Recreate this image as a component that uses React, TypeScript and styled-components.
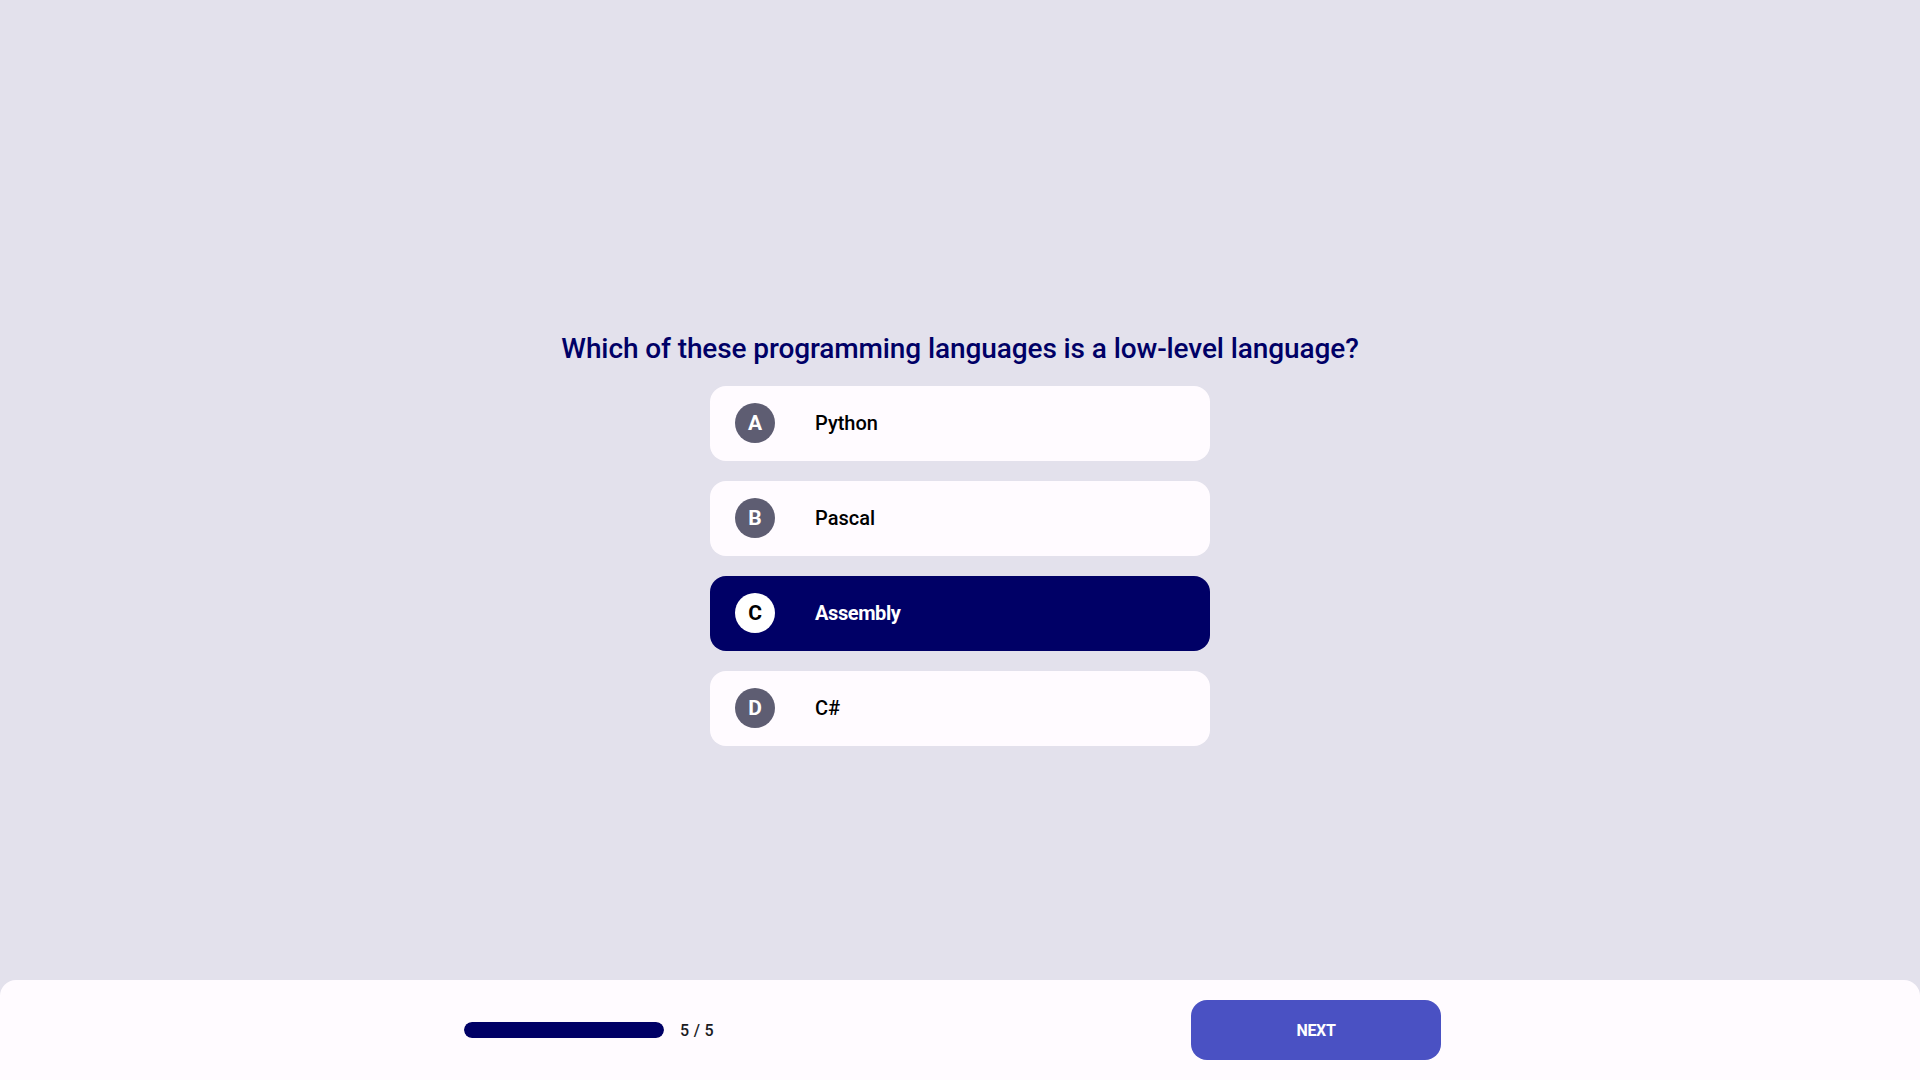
import React, { useState } from "react";
import styled, { createGlobalStyle } from "styled-components";

const GlobalStyle = createGlobalStyle`
  html, body {
    margin: 0;
    padding: 0;
    background: #e3e1ec;
    font-family: Roboto, "Noto Sans", "Liberation Sans", sans-serif;
  }
  * { box-sizing: border-box; }
`;

const Page = styled.div`
  width: 1920px;
  height: 1080px;
  display: flex;
  flex-direction: column;
  background: #e3e1ec;
  overflow: hidden;
`;

const Main = styled.main`
  flex: 1;
  display: flex;
  flex-direction: column;
  align-items: center;
  padding-top: 332px;
`;

const Question = styled.h1`
  margin: 0 0 20px;
  font-size: 28px;
  line-height: 34px;
  font-weight: 500;
  color: #000066;
  letter-spacing: -0.1px;
`;

const Options = styled.div`
  display: flex;
  flex-direction: column;
  gap: 20px;
  width: 500px;
`;

const Option = styled.button<{ $selected: boolean }>`
  display: flex;
  align-items: center;
  height: 75px;
  padding: 0 0 2px 25px;
  border: none;
  border-radius: 16px;
  background: ${(p) => (p.$selected ? "#000066" : "#fffbff")};
  cursor: pointer;
  font-family: inherit;
  text-align: left;
`;

const Badge = styled.span<{ $selected: boolean }>`
  width: 40px;
  height: 40px;
  border-radius: 50%;
  flex: none;
  display: flex;
  align-items: center;
  justify-content: center;
  background: ${(p) => (p.$selected ? "#ffffff" : "#5e5d72")};
  color: ${(p) => (p.$selected ? "#000000" : "#ffffff")};
  font-size: 21px;
  font-weight: 700;
`;

const Label = styled.span<{ $selected: boolean }>`
  margin-left: 40px;
  font-size: 20px;
  font-weight: ${(p) => (p.$selected ? 700 : 500)};
  color: ${(p) => (p.$selected ? "#ffffff" : "#000000")};
  letter-spacing: ${(p) => (p.$selected ? "-0.4px" : "0")};
`;

const Footer = styled.footer`
  height: 100px;
  flex: none;
  background: #fffbff;
  border-radius: 16px 16px 0 0;
  display: flex;
  justify-content: center;
`;

const FooterInner = styled.div`
  width: 1000px;
  padding: 0 19px 0 4px;
  display: flex;
  align-items: center;
  justify-content: space-between;
`;

const Progress = styled.div`
  display: flex;
  align-items: center;
  gap: 16px;
`;

const Track = styled.div`
  width: 200px;
  height: 16px;
  border-radius: 8px;
  background: #c6c5d0;
  overflow: hidden;
`;

const Fill = styled.div`
  height: 100%;
  border-radius: 8px;
  background: #000066;
`;

const Count = styled.span`
  font-size: 16px;
  font-weight: 500;
  color: #1b1b1f;
  letter-spacing: 0.3px;
`;

const NextButton = styled.button`
  width: 250px;
  height: 60px;
  border: none;
  border-radius: 16px;
  background: #4a51c3;
  color: #ffffff;
  font-family: inherit;
  font-size: 16px;
  font-weight: 700;
  letter-spacing: -0.3px;
  cursor: pointer;
`;

const options = [
  { key: "A", label: "Python" },
  { key: "B", label: "Pascal" },
  { key: "C", label: "Assembly" },
  { key: "D", label: "C#" },
];

export default function App() {
  const [selected, setSelected] = useState("C");
  const current = 5;
  const total = 5;
  return (
    <Page>
      <GlobalStyle />
      <Main>
        <Question>Which of these programming languages is a low-level language?</Question>
        <Options>
          {options.map((o) => {
            const s = o.key === selected;
            return (
              <Option key={o.key} $selected={s} onClick={() => setSelected(o.key)}>
                <Badge $selected={s}>{o.key}</Badge>
                <Label $selected={s}>{o.label}</Label>
              </Option>
            );
          })}
        </Options>
      </Main>
      <Footer>
        <FooterInner>
          <Progress>
            <Track>
              <Fill style={{ width: `${(current / total) * 100}%` }} />
            </Track>
            <Count>
              {current} / {total}
            </Count>
          </Progress>
          <NextButton>NEXT</NextButton>
        </FooterInner>
      </Footer>
    </Page>
  );
}
